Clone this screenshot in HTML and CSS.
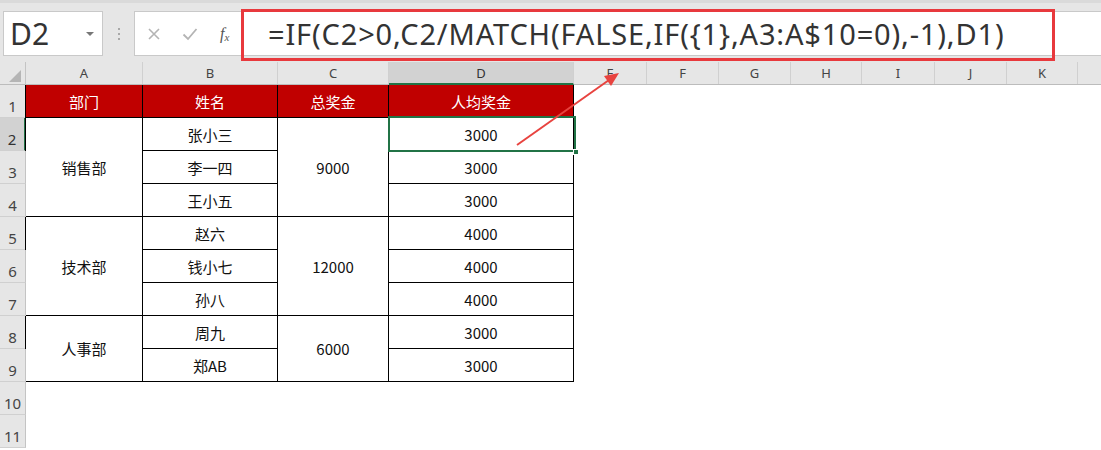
FILE: index.html
```html
<!DOCTYPE html>
<html lang="zh-CN">
<head>
<meta charset="utf-8">
<title>Excel</title>
<link rel="stylesheet" href="styles.css">
</head>
<body>
<div class="page">
  <div class="topbar">
    <div class="namebox">
      <span class="namebox-text">D2</span>
      <span class="namebox-caret"></span>
    </div>
    <div class="grip"><i></i><i></i><i></i></div>
    <div class="btnbox">
      <svg class="btn" width="14" height="14" viewBox="0 0 14 14"><path d="M2 2 L12 12 M12 2 L2 12" stroke="#b4b4b4" stroke-width="1.6" fill="none"/></svg>
      <svg class="btn" width="16" height="14" viewBox="0 0 16 14"><path d="M1.5 7.5 L6 12 L14.5 2" stroke="#b4b4b4" stroke-width="1.8" fill="none"/></svg>
      <span class="fx">f<sub>x</sub></span>
    </div>
    <div class="formula">
      <span class="formula-text">=IF(C2&gt;0,C2/MATCH(FALSE,IF({1},A3:A$10=0),-1),D1)</span>
      <div class="redbox"></div>
    </div>
  </div>

  <div class="colheads">
    <div class="ch corner"><span class="tri"></span></div>
    <div class="ch w-a">A</div>
    <div class="ch w-b">B</div>
    <div class="ch w-c">C</div>
    <div class="ch w-d active">D</div>
    <div class="ch w-e">E</div>
    <div class="ch w-f">F</div>
    <div class="ch w-g">G</div>
    <div class="ch w-h">H</div>
    <div class="ch w-i">I</div>
    <div class="ch w-j">J</div>
    <div class="ch w-k">K</div>
    <div class="ch w-l"></div>
  </div>

  <div class="sheet">
    <div class="rh">1</div>
    <div class="c hd first">部门</div>
    <div class="c hd">姓名</div>
    <div class="c hd">总奖金</div>
    <div class="c hd">人均奖金</div>
    <div class="rest"></div>

    <div class="rh active">2</div>
    <div class="c first span3">销售部</div>
    <div class="c">张小三</div>
    <div class="c span3">9000</div>
    <div class="c">3000</div>
    <div class="rest"></div>

    <div class="rh">3</div>
    <div class="c">李一四</div>
    <div class="c">3000</div>
    <div class="rest"></div>

    <div class="rh">4</div>
    <div class="c">王小五</div>
    <div class="c">3000</div>
    <div class="rest"></div>

    <div class="rh">5</div>
    <div class="c first span3">技术部</div>
    <div class="c">赵六</div>
    <div class="c span3">12000</div>
    <div class="c">4000</div>
    <div class="rest"></div>

    <div class="rh">6</div>
    <div class="c">钱小七</div>
    <div class="c">4000</div>
    <div class="rest"></div>

    <div class="rh">7</div>
    <div class="c">孙八</div>
    <div class="c">4000</div>
    <div class="rest"></div>

    <div class="rh">8</div>
    <div class="c first span2">人事部</div>
    <div class="c">周九</div>
    <div class="c span2">6000</div>
    <div class="c">3000</div>
    <div class="rest"></div>

    <div class="rh">9</div>
    <div class="c">郑AB</div>
    <div class="c">3000</div>
    <div class="rest"></div>

    <div class="rh">10</div>
    <div class="blank"></div>

    <div class="rh">11</div>
    <div class="blank"></div>

    <div class="selection"><span class="handle"></span></div>
  </div>

  <svg class="arrow" width="1101" height="450" viewBox="0 0 1101 450">
    <line x1="517" y1="145" x2="609" y2="80" stroke="#e8433f" stroke-width="2"/>
    <polygon points="619,73 611,86 604,76" fill="#e8433f"/>
  </svg>
</div>
</body>
</html>
```

FILE: styles.css
```css
* { box-sizing: border-box; }
html, body { margin: 0; padding: 0; background: #fff; }
body {
  font-family: "Noto Sans CJK SC", "Noto Sans", sans-serif;
  overflow: hidden;
}
.page {
  position: relative;
  width: 1101px;
  height: 450px;
  overflow: hidden;
}

/* ---------- formula bar ---------- */
.topbar {
  height: 62px;
  background: #e6e6e6;
  border-top: 3px solid #dadada;
  display: flex;
  align-items: flex-start;
  padding-top: 8px;
}
.namebox {
  margin-left: 3px;
  width: 100px;
  height: 45px;
  background: #fff;
  border: 1px solid #c9c9c9;
  display: flex;
  align-items: center;
  position: relative;
}
.namebox-text {
  font-family: "Noto Sans", sans-serif;
  font-size: 30px;
  color: #333;
  padding-left: 6px;
  line-height: 1;
}
.namebox-caret {
  position: absolute;
  right: 8px;
  top: 20px;
  width: 0; height: 0;
  border-left: 4px solid transparent;
  border-right: 4px solid transparent;
  border-top: 4px solid #777;
}
.grip {
  width: 31px;
  height: 45px;
  display: flex;
  flex-direction: column;
  align-items: center;
  justify-content: center;
  gap: 3px;
}
.grip i {
  display: block;
  width: 2px; height: 2px;
  background: #a8a8a8;
}
.btnbox {
  width: 108px;
  height: 45px;
  background: #fff;
  border: 1px solid #c9c9c9;
  border-right: none;
  display: flex;
  align-items: center;
  padding-left: 12px;
  gap: 21px;
}
.btn { display: block; }
.fx {
  font-family: "Liberation Serif", serif;
  font-style: italic;
  font-size: 16px;
  color: #555;
  margin-left: 1px;
}
.fx sub { font-size: 11px; vertical-align: -2px; }
.formula {
  position: relative;
  flex: 1;
  height: 45px;
  background: #fff;
  border-top: 1px solid #c9c9c9;
  border-bottom: 1px solid #c9c9c9;
  display: flex;
  align-items: center;
  padding-left: 26px;
}
.formula-text {
  font-family: "Noto Sans", sans-serif;
  font-size: 29px;
  color: #333;
  white-space: nowrap;
  letter-spacing: 0.85px;
  line-height: 1;
}
.redbox {
  position: absolute;
  left: -1px;
  top: -3px;
  width: 814px;
  height: 52px;
  border: 3px solid #e8393d;
}

/* ---------- column headers ---------- */
.colheads {
  display: flex;
  height: 23px;
  background: #e6e6e6;
  border-bottom: 1px solid #bcbcbc;
}
.ch {
  flex: none;
  height: 22px;
  border-right: 1px solid #d0d0d0;
  font-family: "Noto Sans", sans-serif;
  font-size: 13px;
  color: #444;
  display: flex;
  align-items: center;
  justify-content: center;
}
.ch.corner { width: 26px; position: relative; border-right: 1px solid #c4c4c4; }
.tri {
  position: absolute;
  right: 4px;
  bottom: 2px;
  width: 0; height: 0;
  border-left: 12px solid transparent;
  border-bottom: 12px solid #b5b5b5;
}
.w-a { width: 117px; }
.w-b { width: 135px; }
.w-c { width: 111px; }
.w-d { width: 185px; }
.w-e { width: 73px; }
.w-f { width: 72px; }
.w-g { width: 72px; }
.w-h { width: 71px; }
.w-i { width: 73px; }
.w-j { width: 72px; }
.w-k { width: 71px; }
.w-l { flex: 1; border-right: none; }
.ch.active {
  background: #d2d2d2;
  color: #333;
  height: 23px;
  border-bottom: 2px solid #217346;
  margin-bottom: -1px;
}

/* ---------- grid ---------- */
.sheet {
  position: relative;
  display: grid;
  grid-template-columns: 26px 117px 135px 111px 185px 1fr;
  grid-auto-rows: 33px;
}
.rh {
  grid-column: 1;
  background: #e6e6e6;
  border-right: 1px solid #c4c4c4;
  border-bottom: 1px solid #d0d0d0;
  font-family: "Noto Sans", sans-serif;
  font-size: 15px;
  color: #444;
  display: flex;
  align-items: flex-end;
  justify-content: center;
  line-height: 1;
  padding-bottom: 3px;
}
.rh.active {
  background: #d2d2d2;
  border-right: 2px solid #217346;
  color: #333;
}
.c {
  border-right: 1px solid #000;
  border-bottom: 1px solid #000;
  display: flex;
  align-items: center;
  justify-content: center;
  font-size: 15px;
  color: #111;
}
.c.first { border-left: 1px solid #000; margin-left: -1px; }
.c.hd {
  background: #c00000;
  color: #fff;
}
.span3 { grid-row: span 3; }
.span2 { grid-row: span 2; }
.rest { background: #fff; }
.blank { grid-column: 2 / -1; background: #fff; }

.selection {
  position: absolute;
  left: 388px;
  top: 31px;
  width: 188px;
  height: 36px;
  border: 2px solid #217346;
  pointer-events: none;
}
.handle {
  position: absolute;
  right: -5px;
  bottom: -5px;
  width: 6px;
  height: 6px;
  background: #217346;
  border: 1px solid #fff;
}

.arrow {
  position: absolute;
  left: 0;
  top: 0;
  pointer-events: none;
}
```
